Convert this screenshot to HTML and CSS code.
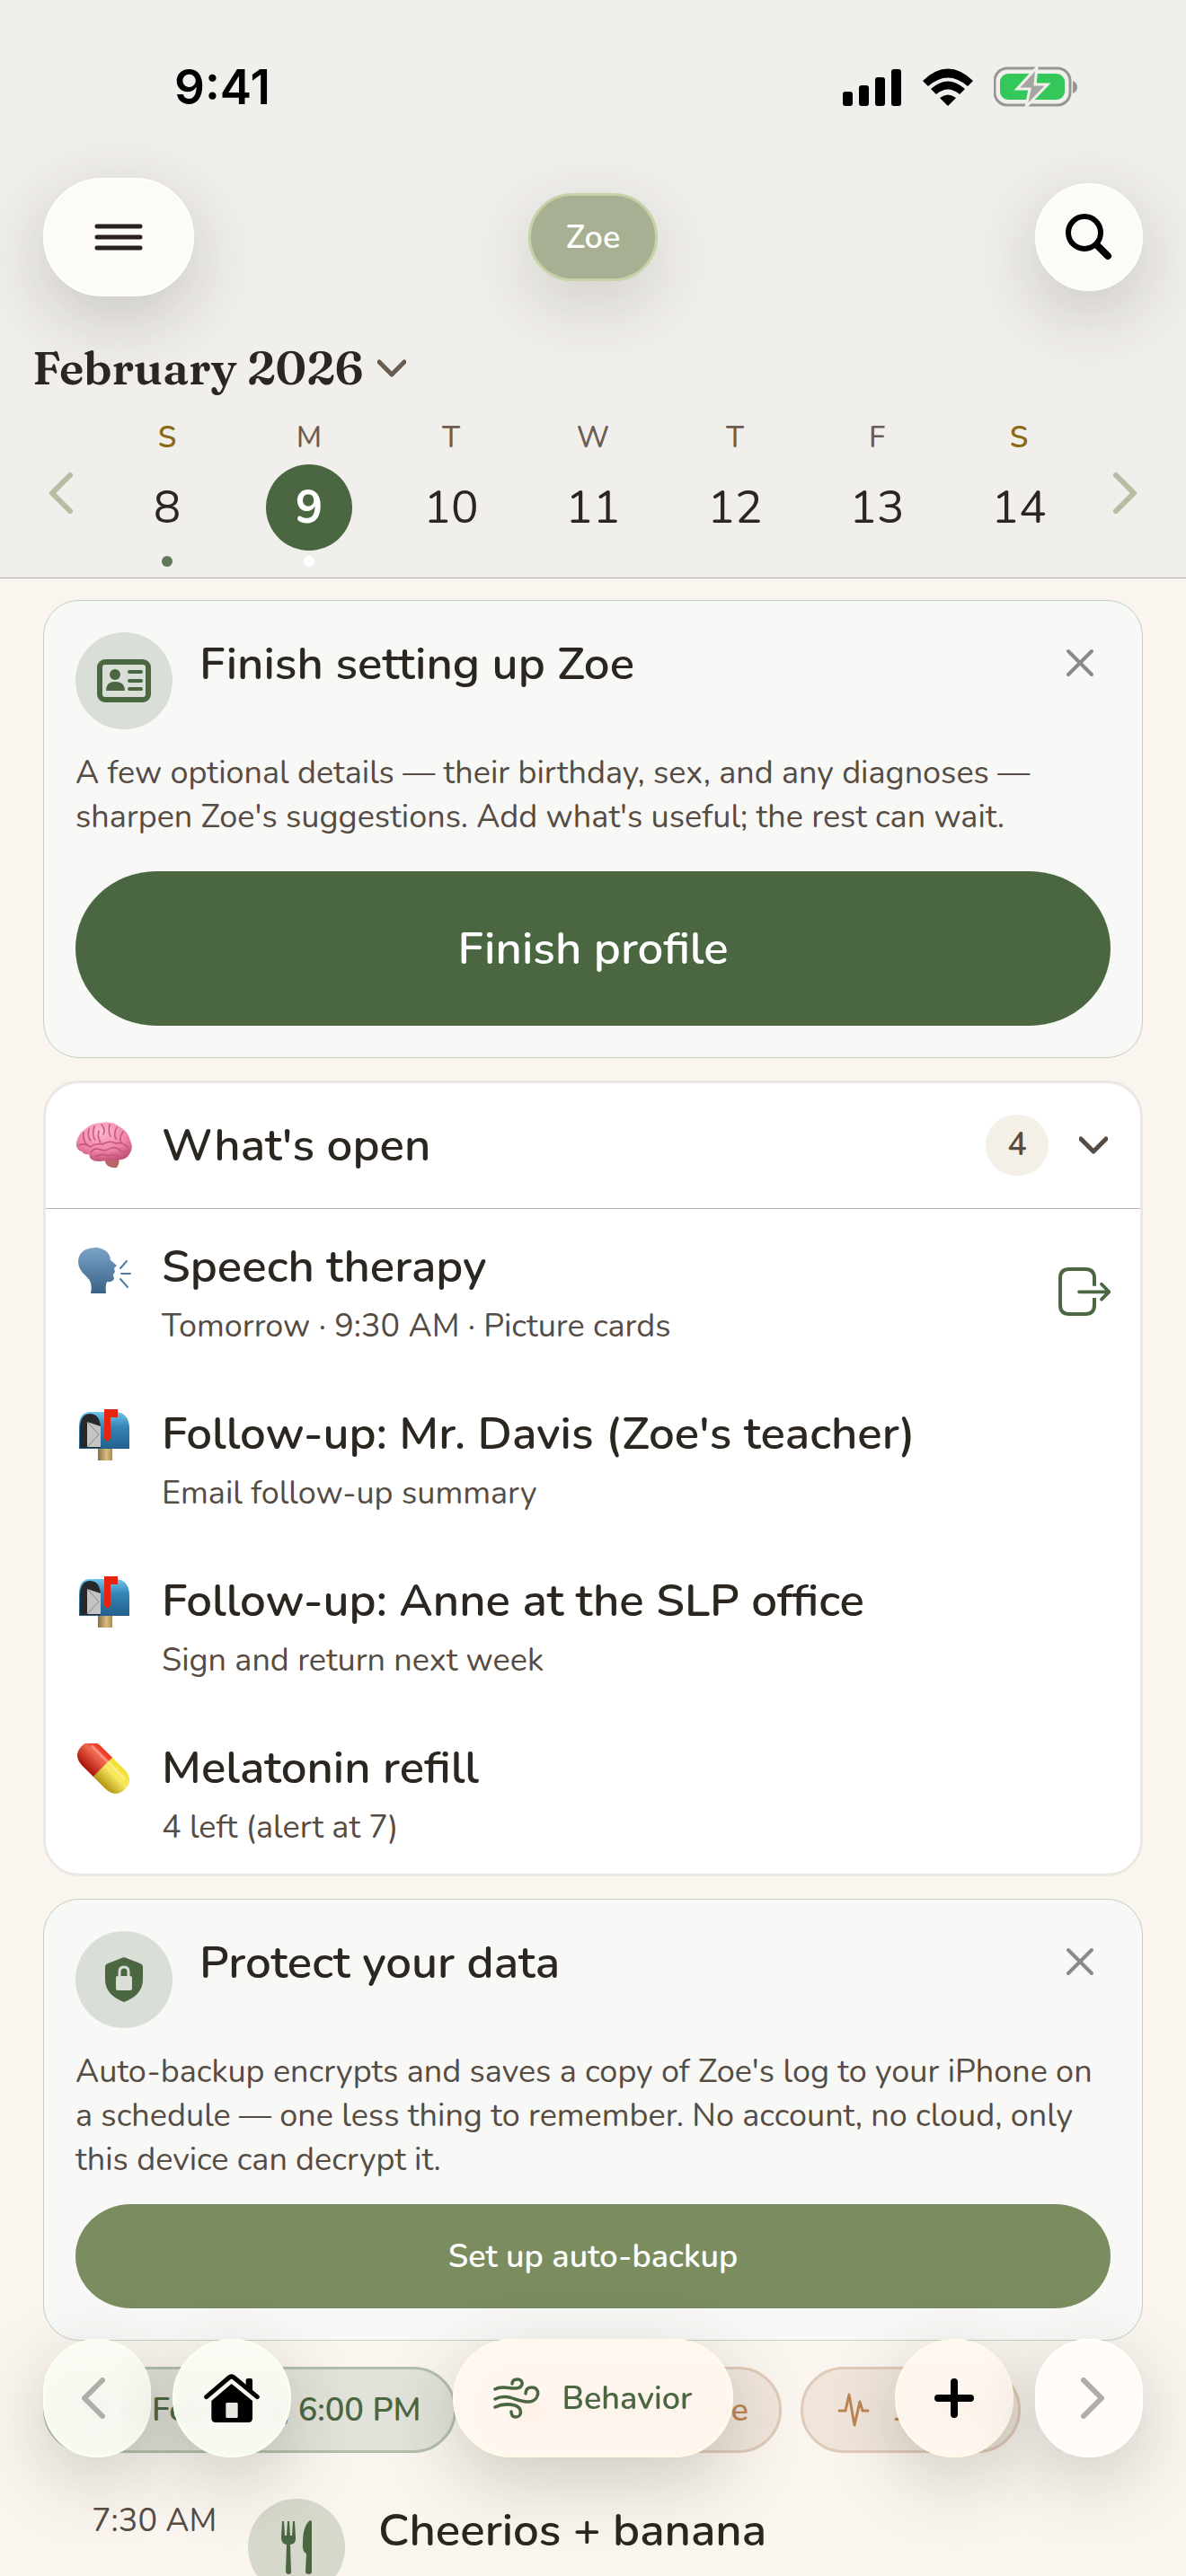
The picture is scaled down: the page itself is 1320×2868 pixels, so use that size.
FILE: index.html
```html
<!DOCTYPE html>
<html lang="en">
<head>
    <meta charset="UTF-8">
    <meta name="viewport" content="width=device-width, initial-scale=1.0">
    <title>Zoe - February 2026</title>
    <link rel="stylesheet" href="styles.css">
</head>
<body>
    <!-- shared icon shapes -->
    <svg class="defs" width="0" height="0" aria-hidden="true">
        <defs>
            <linearGradient id="mail-blue" x1="0" y1="0" x2="0" y2="1">
                <stop offset="0" stop-color="#6fc6ee"/>
                <stop offset="0.4" stop-color="#3585b5"/>
                <stop offset="1" stop-color="#22608c"/>
            </linearGradient>
            <linearGradient id="mail-post" x1="0" y1="0" x2="1" y2="0">
                <stop offset="0" stop-color="#8b6e42"/>
                <stop offset="0.6" stop-color="#dcbc83"/>
                <stop offset="1" stop-color="#a98a58"/>
            </linearGradient>
            <linearGradient id="head-blue" x1="0" y1="0" x2="0" y2="1">
                <stop offset="0" stop-color="#7ba3c6"/>
                <stop offset="1" stop-color="#3a6189"/>
            </linearGradient>
            <radialGradient id="brain-pink" cx="0.45" cy="0.25" r="0.8">
                <stop offset="0" stop-color="#ffb9d0"/>
                <stop offset="0.6" stop-color="#ee83a8"/>
                <stop offset="1" stop-color="#bd4a70"/>
            </radialGradient>
            <linearGradient id="pill-red" x1="0" y1="0" x2="0" y2="1">
                <stop offset="0" stop-color="#f2301a"/>
                <stop offset="0.35" stop-color="#f0694f"/>
                <stop offset="1" stop-color="#a81208"/>
            </linearGradient>
            <linearGradient id="pill-yellow" x1="0" y1="0" x2="0" y2="1">
                <stop offset="0" stop-color="#f4dc28"/>
                <stop offset="0.4" stop-color="#f8ea62"/>
                <stop offset="1" stop-color="#b39410"/>
            </linearGradient>
            <symbol id="chevron-down" viewBox="0 0 32 20">
                <path d="M2 3 L16 17 L30 3" fill="none" stroke="currentColor" stroke-width="5" stroke-linecap="round" stroke-linejoin="round"/>
            </symbol>
            <symbol id="chevron-left" viewBox="0 0 26 46">
                <path d="M23 3 L3 23 L23 43" fill="none" stroke="currentColor" stroke-width="6" stroke-linecap="round" stroke-linejoin="round"/>
            </symbol>
            <symbol id="chevron-right" viewBox="0 0 26 46">
                <path d="M3 3 L23 23 L3 43" fill="none" stroke="currentColor" stroke-width="6" stroke-linecap="round" stroke-linejoin="round"/>
            </symbol>
            <symbol id="close" viewBox="0 0 32 32">
                <path d="M3 3 L29 29 M29 3 L3 29" fill="none" stroke="currentColor" stroke-width="4" stroke-linecap="round"/>
            </symbol>
            <symbol id="fork-knife" viewBox="0 0 38 60">
                <path d="M3 1 L2 19 Q2 26 8 27 L7 56 Q7 60 10 60 Q14 60 13 56 L12 27 Q19 26 18 19 L17 1 L15 1 L14 17 H12 L11 1 H9 L8 17 H6 L5 1 Z" fill="currentColor"/>
                <path d="M36 2 V57 Q36 60 33 60 Q29 60 29 57 L30 37 Q25 35 26 25 Q26 6 34 0 Q36 0 36 2 Z" fill="currentColor"/>
            </symbol>
            <symbol id="mailbox" viewBox="0 0 58 58">
                <rect x="22" y="42" width="16" height="15" fill="url(#mail-post)"/>
                <path d="M12 3 H42 Q57 4 57 22 V44 H1 V20 Q1 4 12 3 Z" fill="url(#mail-blue)"/>
                <path d="M2 43 V20 Q3 5 13 5 Q24 5 25 20 V43 Z" fill="#26282b"/>
                <path d="M10 14 L25 19 V42 H10 Z" fill="#c4c4c4"/>
                <path d="M10 14 L23 28 L10 42" fill="none" stroke="#858585" stroke-width="1"/>
                <path d="M29 0 H44 V9 H36 V32 Q32 39 29 32 Z" fill="#e8230f"/>
            </symbol>
        </defs>
    </svg>

    <div class="app">
        <header class="header">
            <div class="status-bar">
                <span class="clock">9:41</span>
                <div class="status-icons">
                    <svg width="66" height="42" viewBox="0 0 66 42" aria-hidden="true">
                        <rect x="0" y="26" width="11" height="16" rx="3"/>
                        <rect x="18" y="19" width="11" height="23" rx="3"/>
                        <rect x="36" y="10" width="11" height="32" rx="3"/>
                        <rect x="54" y="1" width="11" height="41" rx="3"/>
                    </svg>
                    <svg width="58" height="42" viewBox="0 0 58 42" aria-hidden="true">
                        <path d="M1 14 Q29 -13 57 14 L51 20 Q29 1 7 20 Z"/>
                        <path d="M10 23 Q29 6 48 23 L42 29 Q29 18 16 29 Z"/>
                        <path d="M20 33 Q29 26 38 33 L29 42 Z"/>
                    </svg>
                    <svg width="94" height="46" viewBox="0 0 94 46" aria-hidden="true">
                        <rect x="1" y="2" width="84" height="41" rx="14" fill="none" stroke="#979694" stroke-width="3"/>
                        <rect x="7" y="8" width="72" height="29" rx="9" fill="#34c759"/>
                        <path d="M88 16 Q93 18 93 23 Q93 28 88 30 Z" fill="#979694"/>
                        <path d="M48 1 L26 25 H40 L36 45 L60 20 H46 Z" fill="#a5a5a2" stroke="#f1efeb" stroke-width="3"/>
                    </svg>
                </div>
            </div>

            <div class="toolbar">
                <button class="glass menu-button" aria-label="Menu">
                    <svg width="54" height="30" viewBox="0 0 54 30">
                        <path d="M3 3 H51 M3 15 H51 M3 27 H51" stroke="#2a211d" stroke-width="5" stroke-linecap="round"/>
                    </svg>
                </button>
                <button class="person">Zoe</button>
                <button class="glass search-button" aria-label="Search">
                    <svg width="52" height="52" viewBox="0 0 52 52">
                        <circle cx="21" cy="21" r="18" fill="none" stroke="#000" stroke-width="6"/>
                        <path d="M35 35 L47 47" stroke="#000" stroke-width="8" stroke-linecap="round"/>
                    </svg>
                </button>
            </div>

            <button class="month">
                February 2026
                <svg width="32" height="20"><use href="#chevron-down"/></svg>
            </button>

            <div class="week">
                <button class="week-arrow" aria-label="Previous week"><svg width="26" height="46"><use href="#chevron-left"/></svg></button>
                <div class="days">
                    <button class="day weekend logged"><span class="name">S</span><span class="number">8</span></button>
                    <button class="day selected logged"><span class="name">M</span><span class="number">9</span></button>
                    <button class="day"><span class="name">T</span><span class="number">10</span></button>
                    <button class="day"><span class="name">W</span><span class="number">11</span></button>
                    <button class="day"><span class="name">T</span><span class="number">12</span></button>
                    <button class="day"><span class="name">F</span><span class="number">13</span></button>
                    <button class="day weekend"><span class="name">S</span><span class="number">14</span></button>
                </div>
                <button class="week-arrow" aria-label="Next week"><svg width="26" height="46"><use href="#chevron-right"/></svg></button>
            </div>
        </header>

        <main>
            <section class="card tip">
                <div class="tip-head">
                    <span class="icon-circle">
                        <svg width="60" height="48" viewBox="0 0 60 48" aria-hidden="true">
                            <rect x="3" y="3" width="54" height="42" rx="6" fill="none" stroke="currentColor" stroke-width="6"/>
                            <circle cx="20" cy="17" r="6" fill="currentColor"/>
                            <path d="M10 35 Q10 25 20 25 Q31 25 31 35 Z" fill="currentColor"/>
                            <path d="M36 14 H49 M36 24 H49 M36 33 H49" stroke="currentColor" stroke-width="4" stroke-linecap="round"/>
                        </svg>
                    </span>
                    <h2>Finish setting up Zoe</h2>
                    <button class="close" aria-label="Dismiss"><svg width="32" height="32"><use href="#close"/></svg></button>
                </div>
                <p>A few optional details — their birthday, sex, and any diagnoses —<br>sharpen Zoe's suggestions. Add what's useful; the rest can wait.</p>
                <button class="primary large">Finish profile</button>
            </section>

            <section class="card open-items">
                <button class="open-head">
                    <svg class="emoji" width="64" height="52" viewBox="0 0 64 52" aria-hidden="true">
                        <path d="M34 38 L48 36 Q50 46 46 51 Q36 52 33 45 Z" fill="#b96466"/>
                        <path d="M7 33 Q0 31 1 23 Q3 13 11 8 Q18 1 29 1 Q41 -1 50 6 Q59 11 61 21 Q65 29 60 36 Q56 43 47 42 Q36 43 28 44 Q16 45 15 36 Q10 37 7 33 Z" fill="url(#brain-pink)"/>
                        <g fill="none" stroke="#c4557f" stroke-width="1.5" stroke-linecap="round">
                            <path d="M9 12 Q8 20 12 25 M15 8 Q13 17 17 21 M21 5 Q18 16 22 20 M26 10 Q24 18 28 23 M29 3 Q34 8 31 14 M38 3 Q36 12 39 16 M46 6 Q42 13 45 19 M53 11 Q48 17 51 23"/>
                            <path d="M4 26 Q12 23 16 28 Q23 23 30 25 Q38 20 45 24 Q52 22 58 28 M17 34 Q21 28 28 31 Q34 33 40 29 Q47 28 51 33 Q56 34 59 31 M22 39 Q29 34 36 38 Q43 35 49 39"/>
                        </g>
                    </svg>
                    <span class="open-title">What's open</span>
                    <span class="count">4</span>
                    <svg class="toggle" width="32" height="20"><use href="#chevron-down"/></svg>
                </button>
                <ul class="items">
                    <li>
                        <svg class="emoji" width="64" height="58" viewBox="0 0 64 58" aria-hidden="true">
                            <path d="M17 57 Q20 45 12 38 Q3 31 3 21 Q4 6 24 6 Q38 8 39 20 L46 26 L43 29 L44 33 L42 36 L43 41 Q40 45 35 44 Q33 49 34 57 Z" fill="url(#head-blue)"/>
                            <path d="M50 29 L57 21 M51 35 H61 M50 41 L58 50" stroke="#4b7dab" stroke-width="2" stroke-linecap="round"/>
                        </svg>
                        <div class="item-text">
                            <h3>Speech therapy</h3>
                            <p>Tomorrow · 9:30 AM · Picture cards</p>
                        </div>
                        <button class="item-action" aria-label="Open">
                            <svg width="58" height="54" viewBox="0 0 174 162">
                                <path d="M120 62 V36 Q120 6 90 6 H36 Q6 6 6 36 V126 Q6 156 36 156 H90 Q120 156 120 126 V102" fill="none" stroke="currentColor" stroke-width="12"/>
                                <path d="M69 82 H168 M144 56 L169 82 L144 107" fill="none" stroke="currentColor" stroke-width="11" stroke-linecap="round" stroke-linejoin="round"/>
                            </svg>
                        </button>
                    </li>
                    <li>
                        <svg class="emoji" width="64" height="58" aria-hidden="true"><use href="#mailbox"/></svg>
                        <div class="item-text">
                            <h3>Follow-up: Mr. Davis (Zoe's teacher)</h3>
                            <p>Email follow-up summary</p>
                        </div>
                    </li>
                    <li>
                        <svg class="emoji" width="64" height="58" aria-hidden="true"><use href="#mailbox"/></svg>
                        <div class="item-text">
                            <h3>Follow-up: Anne at the SLP office</h3>
                            <p>Sign and return next week</p>
                        </div>
                    </li>
                    <li>
                        <svg class="emoji" width="64" height="58" viewBox="0 3 64 58" aria-hidden="true">
                            <g transform="rotate(45 31 30)">
                                <path d="M31 15 H12 Q-3 16 -3 30 Q-3 44 12 45 H31 Z" fill="url(#pill-red)"/>
                                <path d="M30 15 H50 Q65 16 65 30 Q65 44 50 45 H30 Z" fill="url(#pill-yellow)"/>
                                <path d="M6 22 H56" stroke="#fff" stroke-opacity="0.35" stroke-width="3" stroke-linecap="round"/>
                            </g>
                        </svg>
                        <div class="item-text">
                            <h3>Melatonin refill</h3>
                            <p>4 left (alert at 7)</p>
                        </div>
                    </li>
                </ul>
            </section>

            <section class="card tip">
                <div class="tip-head">
                    <span class="icon-circle">
                        <svg width="44" height="52" viewBox="0 0 44 52" aria-hidden="true">
                            <path d="M22 1 L40 8 Q43 9 43 12 V26 Q43 43 22 51 Q1 43 1 26 V12 Q1 9 4 8 Z" fill="currentColor"/>
                            <rect x="13" y="22" width="18" height="16" rx="2" fill="#d9dfd7"/>
                            <path d="M17 23 V17 Q17 12 22 12 Q27 12 27 17 V23" fill="none" stroke="#d9dfd7" stroke-width="3"/>
                        </svg>
                    </span>
                    <h2>Protect your data</h2>
                    <button class="close" aria-label="Dismiss"><svg width="32" height="32"><use href="#close"/></svg></button>
                </div>
                <p>Auto-backup encrypts and saves a copy of Zoe's log to your iPhone on<br>a schedule — one less thing to remember. No account, no cloud, only<br>this device can decrypt it.</p>
                <button class="primary small">Set up auto-backup</button>
            </section>

            <div class="chips">
                <button class="chip meal">
                    <svg width="26" height="42"><use href="#fork-knife"/></svg>
                    <span class="chip-dot"></span>
                    February, 6:00 PM
                </button>
                <button class="chip warm">
                    <span class="chip-mark"></span>
                    Mood · Time
                </button>
                <button class="chip warm">
                    <svg width="36" height="38" viewBox="0 0 36 38">
                        <path d="M2 20 H9 L13 2 L19 36 L25 10 L28 20 H34" fill="none" stroke="currentColor" stroke-width="3" stroke-linecap="round" stroke-linejoin="round"/>
                    </svg>
                    1 Stim
                </button>
            </div>

            <article class="entry">
                <time>7:30 AM</time>
                <span class="icon-circle"><svg width="38" height="60"><use href="#fork-knife"/></svg></span>
                <h2>Cheerios + banana</h2>
            </article>
        </main>

        <nav class="bottom-bar">
            <div class="bar-group">
                <button class="glass arrow previous green" aria-label="Previous day"><svg width="26" height="46"><use href="#chevron-left"/></svg></button>
                <button class="glass round green" aria-label="Home">
                    <svg width="62" height="54" viewBox="0 0 186 162">
                        <path d="M140 50 V22 Q140 15 147 15 H156 Q162 15 162 22 V66 Z"/>
                        <path d="M8 77 L84 12 Q92 5 100 12 L178 77" fill="none" stroke="#000" stroke-width="15" stroke-linecap="round"/>
                        <path d="M92 33 L162 90 V148 Q162 162 148 162 H39 Q25 162 25 148 V90 Z"/>
                        <rect x="73" y="96" width="40" height="51" rx="4" fill="#e6eae0"/>
                    </svg>
                </button>
            </div>
            <button class="glass behavior">
                <svg width="52" height="46" viewBox="0 0 52 46" aria-hidden="true">
                    <path d="M2 13 C10 8 18 13 26 12 C34 11 34 2 27 2 C23 2 21 4 21 7 M2 24 C15 17 26 27 38 27 C52 27 53 11 43 11 C38 11 36 14 36 18 M2 33 C12 28 20 30 24 31 C33 34 32 44 25 44 C21 44 20 41 20 38" fill="none" stroke="currentColor" stroke-width="3.5" stroke-linecap="round"/>
                </svg>
                Behavior
            </button>
            <div class="bar-group">
                <button class="glass round warm-glass" aria-label="Add">
                    <svg width="44" height="44" viewBox="0 0 44 44">
                        <path d="M22 4 V40 M4 22 H40" stroke="#000" stroke-width="8" stroke-linecap="round"/>
                    </svg>
                </button>
                <button class="glass arrow next" aria-label="Next day"><svg width="26" height="46"><use href="#chevron-right"/></svg></button>
            </div>
        </nav>
    </div>
</body>
</html>
```

FILE: styles.css
```css
* {
    box-sizing: border-box;
}

body {
    margin: 0;
    background-color: #faf6ef;
    color: #2b2620;
    font-family: "Nunito", "Lato", sans-serif;
    font-size: 36px;
}

button {
    border: none;
    padding: 0;
    background: none;
    color: inherit;
    font: inherit;
    cursor: pointer;
}

h2, h3, p, ul {
    margin: 0;
    padding: 0;
}

svg {
    display: block;
    flex-shrink: 0;
}

.defs {
    position: absolute;
}

.app {
    height: 100vh;
    overflow: hidden;
}

/* header */
.header {
    background-color: #f1efeb;
    border-bottom: 1px solid #b3afaa;
    padding-bottom: 12px;
}

.status-bar {
    display: flex;
    justify-content: space-between;
    align-items: center;
    padding: 66px 120px 0 194px;
    height: 128px;
}

.clock {
    font-family: "Inter", sans-serif;
    font-size: 53px;
    font-weight: 600;
    color: black;
}

.status-icons {
    display: flex;
    align-items: center;
    gap: 22px;
}

.toolbar {
    display: grid;
    grid-template-columns: 1fr auto 1fr;
    align-items: center;
    padding: 70px 48px 0;
}

.glass {
    display: flex;
    align-items: center;
    justify-content: center;
    height: 132px;
    border-radius: 66px;
    border: 2px solid #fffffb;
    background-color: #fcfbf7;
    box-shadow: 0 24px 80px rgba(50, 45, 40, 0.22);
}

.menu-button {
    width: 168px;
}

.search-button {
    width: 120px;
    height: 120px;
    justify-self: end;
}

.person {
    height: 98px;
    padding: 0 39px;
    border: 3px solid #c5d2a5;
    border-radius: 49px;
    background-color: #a7b092;
    color: white;
    font-weight: 600;
    box-shadow: 0 24px 80px rgba(50, 45, 40, 0.18);
}

.month {
    display: flex;
    align-items: center;
    gap: 16px;
    margin: 48px 0 24px 36px;
    font-family: "Fraunces", "Liberation Serif", serif;
    font-size: 51px;
    font-weight: 600;
    line-height: 64px;
}

.month svg {
    color: #6b5d52;
}

.week {
    display: flex;
    align-items: center;
    padding: 0 29px;
}

.week-arrow {
    display: flex;
    justify-content: center;
    width: 78px;
    color: #b5bda3;
}

.days {
    flex: 1;
    display: grid;
    grid-template-columns: repeat(7, 1fr);
}

.day {
    display: flex;
    flex-direction: column;
    align-items: center;
}

.day .name {
    margin-bottom: 7px;
    color: #6b5d52;
    font-size: 33px;
    font-weight: 500;
    line-height: 44px;
}

.day.weekend .name {
    color: #8b6914;
    font-weight: 600;
}

.day .number {
    width: 96px;
    border-radius: 50%;
    font-size: 51px;
    line-height: 96px;
}

.day.selected .number {
    background-color: #4a6741;
    color: white;
    font-weight: bold;
}

.day::after {
    content: "";
    width: 12px;
    height: 12px;
    margin-top: 6px;
    border-radius: 50%;
}

.day.logged::after {
    background-color: #5f7a56;
}

.day.selected::after {
    background-color: white;
}

/* cards */
main {
    display: flex;
    flex-direction: column;
    gap: 25px;
    padding: 24px 48px 0;
}

.card {
    border-radius: 40px;
}

.tip {
    padding: 35px;
    border: 1px solid #c3cec0;
    background-color: #f8f8f6;
}

.tip-head {
    display: flex;
    align-items: flex-start;
    gap: 30px;
    margin-bottom: 24px;
}

.icon-circle {
    display: flex;
    align-items: center;
    justify-content: center;
    flex-shrink: 0;
    width: 108px;
    height: 108px;
    border-radius: 50%;
    background-color: #d9dfd7;
    color: #4a6741;
}

h2, h3, .open-title {
    font-size: 51px;
    font-weight: 600;
    line-height: 70px;
}

.tip-head h2 {
    flex: 1;
}

.close {
    padding: 18px;
    color: #8a8a8e;
}

.tip p {
    color: #564c43;
    line-height: 49px;
}

.primary {
    display: block;
    width: 100%;
    color: white;
}

.large {
    height: 172px;
    margin-top: 36px;
    border-radius: 90px / 86px;
    background-color: #4a6741;
    font-size: 51px;
    font-weight: 600;
}

.small {
    height: 116px;
    margin-top: 25px;
    border-radius: 62px / 58px;
    background-color: #7b8c5e;
    font-weight: 600;
}

.open-items {
    border: 3px solid #ece7e2;
    background-color: white;
}

.open-head {
    display: flex;
    align-items: center;
    width: 100%;
    height: 140px;
    padding: 0 33px 2px;
    border-bottom: 1px solid #b3b0ae;
}

.open-title {
    flex: 1;
    margin-left: 32px;
    text-align: left;
}

.count {
    min-width: 70px;
    border-radius: 34px;
    background-color: #f4efe7;
    color: #564c43;
    font-weight: 600;
    line-height: 68px;
}

.toggle {
    margin: 0 3px 0 34px;
    color: #564c43;
}

.items {
    display: flex;
    flex-direction: column;
    gap: 60px;
    padding: 29px 33px 27px;
    list-style: none;
}

.items li {
    display: flex;
    align-items: flex-start;
}

.items .emoji {
    margin-top: 8px;
}

.item-text {
    flex: 1;
    margin-left: 32px;
}

.item-text p {
    margin-top: 7px;
    color: #564c43;
    line-height: 49px;
}

.item-action {
    align-self: center;
    color: #4a6741;
}

/* chips and log */
.chips {
    display: flex;
    gap: 21px;
    margin-top: 4px;
}

.chip {
    display: flex;
    align-items: center;
    gap: 21px;
    height: 96px;
    padding: 0 36px 0 40px;
    border: 3px solid #b4bfab;
    border-radius: 48px;
    background-color: #e1e2d9;
    color: #4a6741;
    font-weight: 600;
    white-space: nowrap;
}

.chip-dot {
    width: 10px;
    height: 10px;
    border-radius: 50%;
    background-color: #4a6741;
}

.chip.warm {
    padding: 0 34px 0 38px;
    border-color: #e0cab8;
    background-color: #efe5db;
    color: #bd8553;
    gap: 24px;
}

.chip-mark {
    width: 36px;
    height: 36px;
    border-radius: 50%;
    background-color: #e8a868;
}

.entry {
    display: flex;
    align-items: flex-start;
    margin-top: 26px;
}

.entry time {
    width: 228px;
    padding-left: 54px;
    color: #564c43;
    line-height: 49px;
    white-space: nowrap;
}

.entry .icon-circle {
    background-color: #d5d8ca;
}

.entry h2 {
    margin-left: 37px;
}

/* floating bar */
.bottom-bar {
    position: fixed;
    left: 0;
    right: 0;
    bottom: 132px;
    display: flex;
    justify-content: space-between;
    padding: 0 48px;
}

.bottom-bar .glass {
    background-color: rgba(255, 252, 247, 0.96);
    backdrop-filter: blur(6px);
}

.bar-group {
    display: flex;
    gap: 24px;
}

.arrow {
    width: 120px;
    color: #b0aea9;
}

.arrow.previous {
    padding-right: 8px;
}

.arrow.next {
    padding-left: 8px;
}

.round {
    width: 132px;
}

.bottom-bar .green {
    background-color: rgba(249, 251, 243, 0.95);
    border-color: #fbfff2;
}

.bottom-bar .warm-glass,
.bottom-bar .behavior {
    background-color: rgba(255, 247, 240, 0.94);
    border-color: #fffbe9;
}

.behavior {
    gap: 24px;
    width: 312px;
    color: #4a6741;
    font-weight: 600;
}
```
